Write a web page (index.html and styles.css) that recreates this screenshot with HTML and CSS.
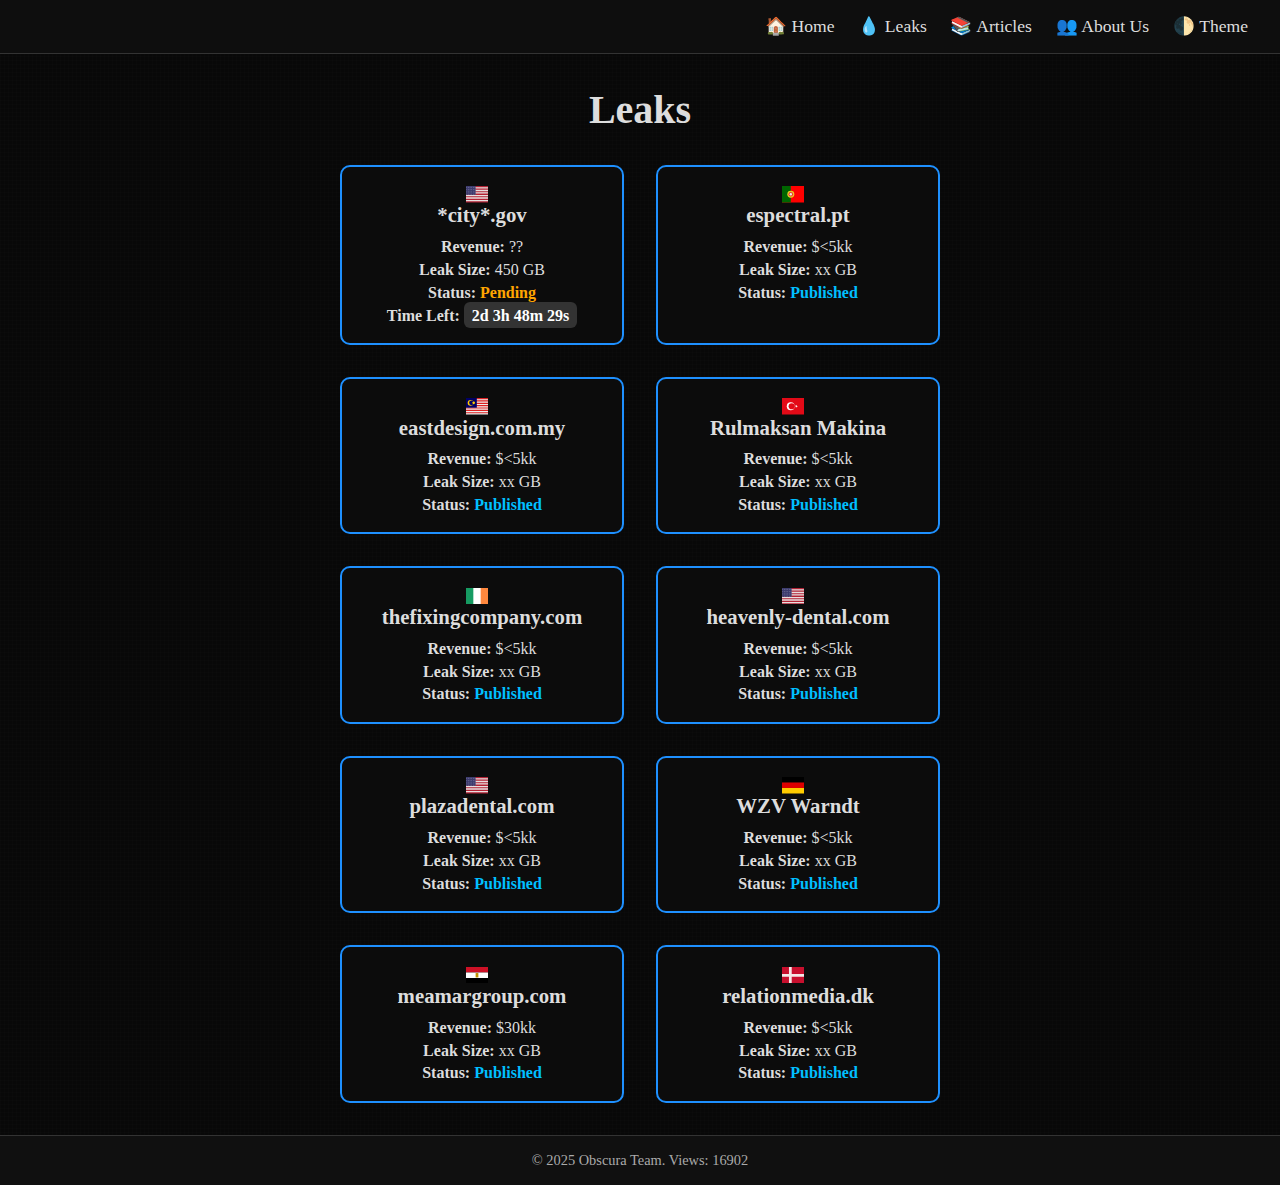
FILE: index.html
```html
<!DOCTYPE html>
<html lang="en">
  <head>
    <meta charset="UTF-8" />
    <meta name="viewport" content="width=device-width, initial-scale=1.0" />
    <title>Leaks</title>
    <link rel="stylesheet" href="styles.css">
  </head>
  <body>
    <header class="topbar">
      <nav class="nav">
        <a href="#">🏠 Home</a>
        <a href="#">💧 Leaks</a>
        <a href="#">📚 Articles</a>
        <a href="#">👥 About Us</a>
        <a href="#">🌓 Theme</a>
      </nav>
    </header>

    <main class="content">
      <h1>Leaks</h1>
      <div class="grid">
        <div class="card">
          <svg class="flag" viewBox="0 0 24 18"><rect width="24" height="18" fill="#b22234"/><path d="M0 2.1h24M0 4.9h24M0 7.6h24M0 10.4h24M0 13.1h24M0 15.9h24" stroke="#e8dede" stroke-width="1.4"/><rect width="10.5" height="9.7" fill="#3c3b6e"/><path d="M.5 1.5h10M.5 4h10M.5 6.5h10M.5 9h10" stroke="#ccd" stroke-width=".7" stroke-dasharray=".7 1.1" opacity=".7"/></svg>
          <h3>*city*.gov</h3>
          <p><b>Revenue:</b> ??</p>
          <p><b>Leak Size:</b> 450 GB</p>
          <p><b>Status:</b> <b class="pending">Pending</b></p>
          <p><b>Time Left:</b> <b class="timer">2d 3h 48m 29s</b></p>
        </div>
        <div class="card">
          <svg class="flag" viewBox="0 0 24 18"><rect width="24" height="18" fill="#f00"/><rect width="9.6" height="18" fill="#060"/><circle cx="9.6" cy="9" r="3.8" fill="#e8d020"/><circle cx="9.6" cy="9" r="2.5" fill="#e33"/><circle cx="9.6" cy="9" r="1.3" fill="#eee"/></svg>
          <h3>espectral.pt</h3>
          <p><b>Revenue:</b> $&lt;5kk</p>
          <p><b>Leak Size:</b> xx GB</p>
          <p><b>Status:</b> <b class="published">Published</b></p>
        </div>

        <div class="card">
          <svg class="flag" viewBox="0 0 24 18"><rect width="24" height="18" fill="#eee"/><path d="M0 .65h24M0 3.2h24M0 5.8h24M0 8.35h24M0 10.9h24M0 13.5h24M0 16.1h24" stroke="#d22" stroke-width="1.3"/><rect width="11.8" height="10.6" fill="#010066"/><circle cx="5" cy="5.3" r="3.2" fill="#fc0"/><circle cx="6" cy="5.3" r="2.6" fill="#010066"/><circle cx="8.4" cy="5.3" r="1.4" fill="#fc0"/></svg>
          <h3>eastdesign.com.my</h3>
          <p><b>Revenue:</b> $&lt;5kk</p>
          <p><b>Leak Size:</b> xx GB</p>
          <p><b>Status:</b> <b class="published">Published</b></p>
        </div>
        <div class="card">
          <svg class="flag" viewBox="0 0 24 18"><rect width="24" height="18" fill="#e30a17"/><circle cx="9.5" cy="9" r="4.3" fill="#fff"/><circle cx="10.6" cy="9" r="3.4" fill="#e30a17"/><path d="M17.4 9l-3.1 1 1.9-2.6v3.2L14.3 8z" fill="#fff"/></svg>
          <h3>Rulmaksan Makina</h3>
          <p><b>Revenue:</b> $&lt;5kk</p>
          <p><b>Leak Size:</b> xx GB</p>
          <p><b>Status:</b> <b class="published">Published</b></p>
        </div>

        <div class="card">
          <svg class="flag" viewBox="0 0 24 18"><rect width="24" height="18" fill="#fff"/><rect width="8" height="18" fill="#169b62"/><rect x="16" width="8" height="18" fill="#ff883e"/></svg>
          <h3>thefixingcompany.com</h3>
          <p><b>Revenue:</b> $&lt;5kk</p>
          <p><b>Leak Size:</b> xx GB</p>
          <p><b>Status:</b> <b class="published">Published</b></p>
        </div>
        <div class="card">
          <svg class="flag" viewBox="0 0 24 18"><rect width="24" height="18" fill="#b22234"/><path d="M0 2.1h24M0 4.9h24M0 7.6h24M0 10.4h24M0 13.1h24M0 15.9h24" stroke="#e8dede" stroke-width="1.4"/><rect width="10.5" height="9.7" fill="#3c3b6e"/><path d="M.5 1.5h10M.5 4h10M.5 6.5h10M.5 9h10" stroke="#ccd" stroke-width=".7" stroke-dasharray=".7 1.1" opacity=".7"/></svg>
          <h3>heavenly-dental.com</h3>
          <p><b>Revenue:</b> $&lt;5kk</p>
          <p><b>Leak Size:</b> xx GB</p>
          <p><b>Status:</b> <b class="published">Published</b></p>
        </div>

        <div class="card">
          <svg class="flag" viewBox="0 0 24 18"><rect width="24" height="18" fill="#b22234"/><path d="M0 2.1h24M0 4.9h24M0 7.6h24M0 10.4h24M0 13.1h24M0 15.9h24" stroke="#e8dede" stroke-width="1.4"/><rect width="10.5" height="9.7" fill="#3c3b6e"/><path d="M.5 1.5h10M.5 4h10M.5 6.5h10M.5 9h10" stroke="#ccd" stroke-width=".7" stroke-dasharray=".7 1.1" opacity=".7"/></svg>
          <h3>plazadental.com</h3>
          <p><b>Revenue:</b> $&lt;5kk</p>
          <p><b>Leak Size:</b> xx GB</p>
          <p><b>Status:</b> <b class="published">Published</b></p>
        </div>
        <div class="card">
          <svg class="flag" viewBox="0 0 24 18"><rect width="24" height="6" fill="#000"/><rect y="6" width="24" height="6" fill="#d00"/><rect y="12" width="24" height="6" fill="#fc0"/></svg>
          <h3>WZV Warndt</h3>
          <p><b>Revenue:</b> $&lt;5kk</p>
          <p><b>Leak Size:</b> xx GB</p>
          <p><b>Status:</b> <b class="published">Published</b></p>
        </div>

        <div class="card">
          <svg class="flag" viewBox="0 0 24 18"><rect width="24" height="6" fill="#ce1126"/><rect y="6" width="24" height="6" fill="#fff"/><rect y="12" width="24" height="6" fill="#000"/><rect x="10.5" y="6.6" width="3" height="4.8" fill="#c09300"/></svg>
          <h3>meamargroup.com</h3>
          <p><b>Revenue:</b> $30kk</p>
          <p><b>Leak Size:</b> xx GB</p>
          <p><b>Status:</b> <b class="published">Published</b></p>
        </div>
        <div class="card">
          <svg class="flag" viewBox="0 0 24 18"><rect width="24" height="18" fill="#c8102e"/><path d="M0 9h24M9.1 0v18" stroke="#f4e8e8" stroke-width="3"/></svg>
          <h3>relationmedia.dk</h3>
          <p><b>Revenue:</b> $&lt;5kk</p>
          <p><b>Leak Size:</b> xx GB</p>
          <p><b>Status:</b> <b class="published">Published</b></p>
        </div>
      </div>
    </main>

    <footer class="footer">© 2025 Obscura Team. Views: 16902</footer>
  </body>
</html>
```

FILE: styles.css
```css
body {
  font-family: "Liberation Serif", "Noto Color Emoji", serif;
  background-color: #080808;
  background-image: linear-gradient(rgba(255, 255, 255, 0.008) 1px, transparent 1px),
    linear-gradient(90deg, rgba(255, 255, 255, 0.008) 1px, transparent 1px);
  background-size: 4px 4px;
  color: #ddd;
  margin: 0;
  padding: 0;
}
.topbar {
  background-color: #0e0e0e;
  border-bottom: 1px solid #333;
  padding: 16px 32px;
}
.nav {
  display: flex;
  justify-content: flex-end;
  gap: 24px;
}
.nav a {
  color: #ddd;
  font-size: 17.6px;
  text-decoration: none;
}
.content {
  padding: 32px 0;
}
h1 {
  font-size: 40px;
  text-align: center;
  margin: 0 0 31.7px;
}
.grid {
  display: grid;
  grid-template-columns: 1fr 1fr;
  gap: 32px;
  width: 600px;
  margin: 0 auto;
}
.card {
  background-color: #0c0c0c;
  border: 2px solid #1e90ff;
  border-radius: 10px;
  padding: 19.4px 16px 13.5px;
  text-align: center;
}
.flag {
  display: block;
  width: 22px;
  height: 16.5px;
  margin: 0 auto 0.8px;
  transform: translateX(-5px);
}
h3 {
  font-size: 20.8px;
  margin: 0 0 10.85px;
}
p {
  margin: 4.8px 0;
}
.pending {
  color: #ffa500;
}
.published {
  color: #00bfff;
}
.timer {
  background-color: #333;
  color: #fff;
  padding: 4.8px 8px;
  border-radius: 6px;
}
.footer {
  background-color: #101010;
  border-top: 1px solid #333;
  color: #aaa;
  font-size: 14.4px;
  padding: 16px;
  text-align: center;
}
```
